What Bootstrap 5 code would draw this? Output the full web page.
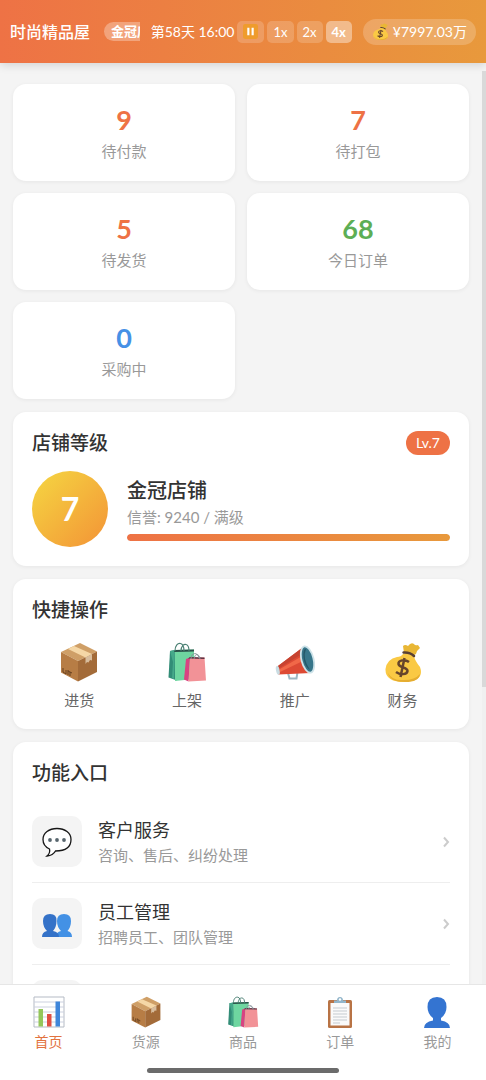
<!DOCTYPE html>
<html lang="zh-CN">
<head>
<meta charset="utf-8">
<meta name="viewport" content="width=device-width, initial-scale=1">
<title>时尚精品屋</title>
<link href="https://cdn.jsdelivr.net/npm/bootstrap@5.3.0/dist/css/bootstrap.min.css" rel="stylesheet">
<style>
  :root { --brand: #ee7245; --brand-end: #e8993c; --ink: #333; --muted: #999; }
  body { font-family: Lato, "Noto Sans CJK SC", sans-serif; font-size: 15px; line-height: 20px; color: var(--ink); background: #f4f4f4; }
  a { color: inherit; text-decoration: none; }
  .topbar { background: linear-gradient(90deg, var(--brand), var(--brand-end)); color: #fff; height: 63px; padding: 0 10px; gap: 11px; box-shadow: 0 2px 9px rgba(0,0,0,.14); font-size: 14px; }
  .brand-zone { gap: 14px; min-width: 0; }
  .shop-name { font-size: 16px; font-weight: 500; }
  .rank-pill { background: rgba(255,255,255,.3); border-radius: 10px; padding: 0 7px; font-size: 13px; line-height: 19px; font-weight: 700; }
  .speeds { gap: 3px; }
  .speed { border: 0; border-radius: 5px; background: rgba(255,255,255,.18); color: #fff; height: 22px; padding: 0 6px; font-size: 13px; line-height: 22px; }
  .speed.on { background: rgba(255,255,255,.4); font-weight: 700; }
  .money-pill { background: rgba(255,255,255,.2); height: 26px; padding: 0 9px; gap: 4px; }
  .scroll-area { padding: 13px; scrollbar-width: none; min-width: 0; }
  .scroll-area::-webkit-scrollbar { display: none; }
  .page-stack { gap: 13px; }
  .stats { display: grid; grid-template-columns: 1fr 1fr; gap: 12px; }
  .panel { background: #fff; border-radius: 13px; box-shadow: 0 1px 4px rgba(0,0,0,.06); padding: 19px; }
  .stat { height: 97px; padding: 19px 0; text-align: center; color: var(--muted); }
  .stat-num { font-size: 27px; line-height: 34px; font-weight: 700; color: var(--brand); margin-bottom: 4px; }
  .stat-num.green { color: #5dae55; }
  .stat-num.blue { color: #4691e6; }
  .panel-title { font-size: 19px; line-height: 24px; font-weight: 500; margin: 0; }
  .panel-head { margin-bottom: 16px; }
  .lv { background: var(--brand); color: #fff; padding: 0 10px; font-size: 14px; line-height: 24px; }
  .level { gap: 19px; }
  .medal { width: 76px; height: 76px; background: linear-gradient(135deg, #f5d742, #f39336); color: #fff; font-size: 32px; font-weight: 700; }
  .level-name { font-size: 20px; line-height: 26px; font-weight: 500; margin: 0 0 4px; }
  .credit { color: var(--muted); margin-bottom: 7px; }
  .meter { height: 7px; border-radius: 4px; background: #eee; }
  .meter .progress-bar { background: linear-gradient(90deg, var(--brand), var(--brand-end)); border-radius: 4px; }
  .quick { display: grid; grid-template-columns: repeat(4, 1fr); gap: 13px; }
  .quick button { border: 0; background: none; padding: 4px 0 0; color: #666; }
  .quick svg { width: 40px; height: 40px; margin-bottom: 8px; }
  .entry { gap: 16px; padding: 15px 0; border-bottom: 1px solid #eee; }
  .entry-icon { width: 50px; height: 51px; border-radius: 10px; background: #f4f4f4; }
  .entry-icon svg { width: 30px; height: 30px; }
  .entry-name { font-size: 18px; line-height: 24px; margin-bottom: 3px; }
  .entry-note { color: var(--muted); }
  .rail { width: 4px; background: #f0f0f0; }
  .rail-thumb { background: #d9d9d9; }
  .main-row { margin-top: 8px; min-height: 0; }
  .tabs { background: #fff; border-top: 1px solid #e6e6e6; padding-top: 11px; font-size: 14px; color: var(--muted); position: relative; z-index: 1; }
  .tabs svg { width: 32px; height: 32px; margin-bottom: 4px; }
  .tabs .active { color: #e2733f; }
  .home-bar { width: 192px; height: 5px; background: #6b6b6b; margin: 16px auto 7px; }
</style>
</head>
<body>
<svg class="d-none" aria-hidden="true">
  <symbol id="box" viewBox="0 0 40 40">
    <path d="M2 10 21 1 38 9.500 19 19Z" fill="#cf9f67"/>
    <path d="M2 10 19 19V39.500L2 30.500Z" fill="#b77d45"/>
    <path d="M19 19 38 9.500V30L19 39.500Z" fill="#a36b39"/>
    <path d="M9 7 15 4 33 12 26.500 15.500Z" fill="#f5d7a6"/>
    <path d="M26.500 15.500 33 12V18.500L31 18 29.500 20.500 28 20 26.500 22Z" fill="#d8bd9d"/>
    <path d="M4 26v4l3 2v-4M9 28v5M11 30v4M9 29l4 2" stroke="#66401f" fill="none"/>
  </symbol>
  <symbol id="bags" viewBox="0 0 40 40">
    <path d="M3 9 8 8 10 38.500 1.500 35.500Z" fill="#328d77"/>
    <path d="M8 8 27 7.500V37L8 39Z" fill="#6ed6a0"/>
    <path d="M3 9 8 8 7 37 5 36 6 20Z" fill="#45a98a"/>
    <path d="M8 8 27 7.500V9.500L7 10Z" fill="#294d47"/>
    <path d="M8 9C8 3 11 1 13.500 1.500S17 5 17 9M14 9C14 4 17 2 19 2.500S22 5 22 9" stroke="#4a8073" stroke-width="1.200" fill="none"/>
    <path d="M19 17 23 15.500 21.500 39.500 17 37.500Z" fill="#d84382"/>
    <path d="M23 15.500 37.500 15.500 39 38.500 21.500 39.500Z" fill="#f29297"/>
    <path d="M21 16.500 23 15 37.500 15.500V17Z" fill="#5b3040"/>
    <path d="M24 17C24 10 31 10 32 16M27 17C28 11 32 11 33 17" stroke="#88939a" fill="none"/>
  </symbol>
  <symbol id="horn" viewBox="0 0 40 40">
    <path d="M13 31 14.500 36.500H21.500L22.500 30" fill="none" stroke="#9db7c2" stroke-width="2"/>
    <path d="M3 24 29 4.500 36 31 3.500 32.500Q1 29 3 24Z" fill="#dd4a34"/>
    <path d="M3 24 29 4.500 30 10 3 27Z" fill="#c64330"/>
    <path d="M5 27 29 13 30 18 5 30Z" fill="#f16848"/>
    <ellipse cx="2.800" cy="28.300" rx="1.800" ry="4.500" fill="#c9dce2" transform="rotate(-12 2.800 28.300)"/>
    <ellipse cx="32.500" cy="17.500" rx="6" ry="13.500" fill="#37768a" stroke="#cee3e9" stroke-width="1.800" transform="rotate(-14 32.500 17.500)"/>
    <path d="M31 7Q27 16 35 28Q29 24 28.500 15T31 7Z" fill="#245868"/>
  </symbol>
  <symbol id="money" viewBox="0 0 40 40">
    <path d="M21 11 20 4Q22 2 25 4Q28 0 31 2Q32 4 35 3L37 6Q34 8 33 12L29 14Z" fill="#e9b735"/>
    <path d="M20 12Q27 10 31 14Q32 19 37 25Q42 39 22 40Q2 40 2.500 27Q4 17 14 15Q18 15 20 12Z" fill="#fac944"/>
    <path d="M5 31Q9 39 21 38Q32 38 37 32Q36 40 22 40Q7 40 5 31Z" fill="#e5ad31"/>
    <path d="M20.500 10.500Q27 10 31 14" stroke="#5a4034" stroke-width="2.500" stroke-linecap="round" fill="none"/>
    <path d="M26 20C22 17 15 18 15.500 22S25 25 24.500 29 17 33 13 30M21.500 16 17.500 35" stroke="#67452b" stroke-width="2.500" fill="none"/>
  </symbol>
  <symbol id="bubble" viewBox="0 0 30 30">
    <path d="M15 1.500C7 1.500 1 6 1 12.500Q1 19 7.500 22Q8.500 26 5 29Q11 28.500 13.500 24Q29 24 29 12.500C29 6 23 1.500 15 1.500Z" fill="#fff" stroke="#161616" stroke-width="1.300"/>
    <g fill="#57656d"><circle cx="8" cy="13" r="1.900"/><circle cx="15" cy="13" r="1.900"/><circle cx="22" cy="13" r="1.900"/></g>
  </symbol>
  <symbol id="people" viewBox="0 0 30 30">
    <path d="M14 28Q14 23 19 22Q15 18 15 12Q15 5 22 5T29 12Q29 18 25.500 22Q30 23 30 28Z" fill="#4391e5"/>
    <path d="M0 28Q0 23 5 22Q1 18 1 12Q1 5 8 5T14.500 12Q14.500 18 11 22Q17 23 17 28Z" fill="#3472c8"/>
  </symbol>
  <symbol id="chart" viewBox="0 0 32 32">
    <path d="M1 1H31V31H1Z" fill="#fff" stroke="#b5bbc5"/>
    <path d="M1 6H31M1 11H31M1 16H31M1 21H31M1 26H31" stroke="#ccd1df"/>
    <path d="M5.500 13h4.500v17.500H5.500Z" fill="#94c65a"/><path d="M14 18h4.500v12.500h-4.500Z" fill="#df4e43"/><path d="M22.500 5.500h4.500v25h-4.500Z" fill="#3f86da"/>
  </symbol>
  <symbol id="board" viewBox="0 0 32 32">
    <rect x="4" y="4" width="24" height="28" rx="1.500" fill="#b87345"/>
    <path d="M6.500 7H25.500V29.500H6.500Z" fill="#fafafa"/>
    <path d="M9 12H23M9 15H23M9 18H23M9 21H23M9 24H23M9 27H16" stroke="#c5cbd0"/>
    <path d="M10 7V4.500H13Q13 1 16 1T19 4.500H22V7Z" fill="#91b5ca"/><circle cx="16" cy="3.500" r="1.200" fill="#fff"/>
  </symbol>
  <symbol id="person" viewBox="0 0 32 32">
    <path d="M3 32Q3 26 12 24.500V22Q6.500 18 6.500 11Q6.500 1 16 1T25.500 11Q25.500 18 20 22V24.500Q29 26 29 32Z" fill="#3474d1"/>
  </symbol>
</svg>

<div class="vh-100 d-flex flex-column overflow-hidden">
  <header class="topbar d-flex align-items-center flex-shrink-0 text-nowrap">
    <div class="brand-zone d-flex align-items-center flex-fill overflow-hidden">
      <span class="shop-name">时尚精品屋</span>
      <span class="rank-pill">金冠店铺</span>
    </div>
    <div class="speeds d-flex align-items-center">
      <span>第58天 16:00</span>
      <button class="speed d-flex align-items-center" type="button" aria-label="暂停">
        <svg width="15" height="15" viewBox="0 0 14 14"><rect width="14" height="14" rx="2" fill="#ef9c2d"/><path d="M5 3.500V10.500M9 3.500V10.500" stroke="#fff" stroke-width="2"/></svg>
      </button>
      <button class="speed" type="button">1x</button>
      <button class="speed" type="button">2x</button>
      <button class="speed on" type="button">4x</button>
    </div>
    <div class="money-pill rounded-pill d-flex align-items-center">
      <svg width="17" height="17"><use href="#money"/></svg><span>¥7997.03万</span>
    </div>
  </header>

  <div class="main-row d-flex flex-fill">
    <main class="scroll-area flex-fill overflow-auto">
      <div class="page-stack d-flex flex-column">
        <section class="stats">
          <div class="panel stat"><div class="stat-num">9</div>待付款</div>
          <div class="panel stat"><div class="stat-num">7</div>待打包</div>
          <div class="panel stat"><div class="stat-num">5</div>待发货</div>
          <div class="panel stat"><div class="stat-num green">68</div>今日订单</div>
          <div class="panel stat"><div class="stat-num blue">0</div>采购中</div>
        </section>

        <section class="panel">
          <div class="panel-head d-flex align-items-center justify-content-between">
            <h2 class="panel-title">店铺等级</h2><span class="lv rounded-pill">Lv.7</span>
          </div>
          <div class="level d-flex align-items-center">
            <div class="medal rounded-circle d-flex align-items-center justify-content-center flex-shrink-0">7</div>
            <div class="flex-fill">
              <h3 class="level-name">金冠店铺</h3>
              <div class="credit">信誉: 9240 / 满级</div>
              <div class="progress meter" role="progressbar" aria-label="信誉" aria-valuenow="100" aria-valuemin="0" aria-valuemax="100"><div class="progress-bar" style="width:100%"></div></div>
            </div>
          </div>
        </section>

        <section class="panel">
          <h2 class="panel-title panel-head">快捷操作</h2>
          <div class="quick">
            <button type="button" class="d-flex flex-column align-items-center"><svg><use href="#box"/></svg>进货</button>
            <button type="button" class="d-flex flex-column align-items-center"><svg><use href="#bags"/></svg>上架</button>
            <button type="button" class="d-flex flex-column align-items-center"><svg><use href="#horn"/></svg>推广</button>
            <button type="button" class="d-flex flex-column align-items-center"><svg><use href="#money"/></svg>财务</button>
          </div>
        </section>

        <section class="panel">
          <h2 class="panel-title panel-head">功能入口</h2>
          <a href="#" class="entry d-flex align-items-center">
            <span class="entry-icon d-flex align-items-center justify-content-center"><svg><use href="#bubble"/></svg></span>
            <span class="flex-fill"><span class="entry-name d-block">客户服务</span><span class="entry-note d-block">咨询、售后、纠纷处理</span></span>
            <svg width="8" height="12" viewBox="0 0 8 12"><path d="M2 1.500 6 6 2 10.500" fill="none" stroke="#ccc" stroke-width="2"/></svg>
          </a>
          <a href="#" class="entry d-flex align-items-center">
            <span class="entry-icon d-flex align-items-center justify-content-center"><svg><use href="#people"/></svg></span>
            <span class="flex-fill"><span class="entry-name d-block">员工管理</span><span class="entry-note d-block">招聘员工、团队管理</span></span>
            <svg width="8" height="12" viewBox="0 0 8 12"><path d="M2 1.500 6 6 2 10.500" fill="none" stroke="#ccc" stroke-width="2"/></svg>
          </a>
          <div class="entry d-flex align-items-center"><span class="entry-icon"></span></div>
        </section>
      </div>
    </main>
    <div class="rail" aria-hidden="true"><div class="rail-thumb" style="height:67.5%"></div></div>
  </div>

  <footer class="tabs flex-shrink-0">
    <nav class="d-flex">
      <a href="#" class="active d-flex flex-column align-items-center col"><svg><use href="#chart"/></svg>首页</a>
      <a href="#" class="d-flex flex-column align-items-center col"><svg><use href="#box"/></svg>货源</a>
      <a href="#" class="d-flex flex-column align-items-center col"><svg><use href="#bags"/></svg>商品</a>
      <a href="#" class="d-flex flex-column align-items-center col"><svg><use href="#board"/></svg>订单</a>
      <a href="#" class="d-flex flex-column align-items-center col"><svg><use href="#person"/></svg>我的</a>
    </nav>
    <div class="home-bar rounded-pill"></div>
  </footer>
</div>
<script src="https://cdn.jsdelivr.net/npm/bootstrap@5.3.0/dist/js/bootstrap.bundle.min.js"></script>
</body>
</html>
